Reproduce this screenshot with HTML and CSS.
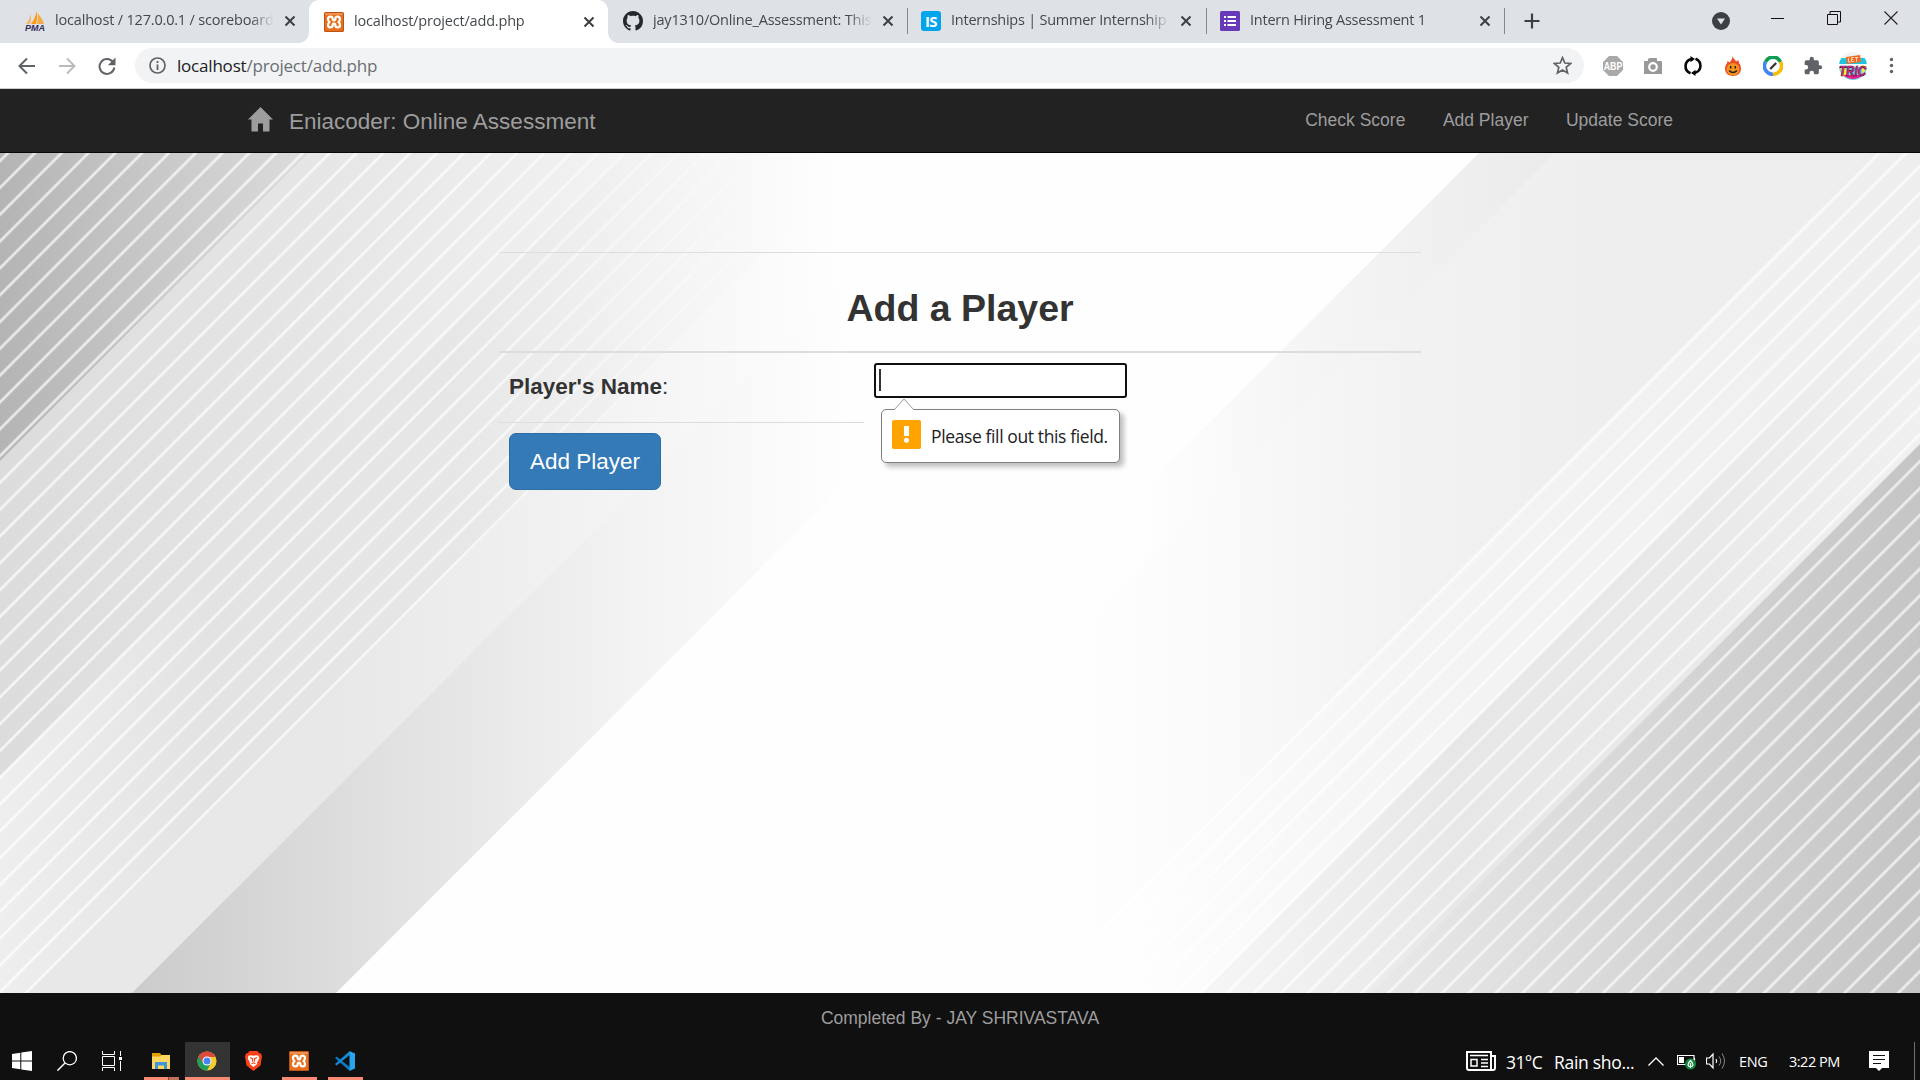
FILE: index.html
```html
<!DOCTYPE html>
<html lang="en">
<head>
<meta charset="utf-8">
<title>localhost/project/add.php</title>
<link rel="stylesheet" href="styles.css">
</head>
<body>
<svg class="defs" width="0" height="0">
  <symbol id="close" viewBox="0 0 12 12"><path d="M1.5 1.5l9 9M10.500 1.500l-9 9" stroke="#3c4043" stroke-width="2" fill="none"/></symbol>
  <symbol id="xampp" viewBox="0 0 20 20">
    <rect width="20" height="20" rx="1.500" fill="#e8701c"/><rect x=".5" y=".5" width="19" height="19" rx="1.500" fill="none" stroke="#b9551a"/><path d="M1 1h18v2H1z" fill="#f6a56c" opacity=".6"/>
    <path d="M10 8.300C9 8.300 8.600 7.600 8.600 6.500 8.600 5 7.600 4.600 6.400 4.600 4.800 4.600 4 5.600 4 7c0 1.500.8 2.200 1.400 3C4.800 10.800 4 11.500 4 13c0 1.400.8 2.400 2.400 2.400 1.200 0 2.200-.4 2.200-1.900 0-1.100.4-1.800 1.400-1.800s1.400.7 1.400 1.800c0 1.500 1 1.900 2.200 1.900 1.600 0 2.400-1 2.400-2.400 0-1.500-.8-2.200-1.400-3 .6-.8 1.400-1.500 1.400-3 0-1.400-.8-2.400-2.400-2.400-1.200 0-2.200.4-2.200 1.900 0 1.100-.4 1.800-1.400 1.800z" fill="none" stroke="#fff" stroke-width="2.200"/>
  </symbol>
</svg>

<header class="browser">
  <div class="tabstrip">
    <div class="tab">
      <svg class="fav" viewBox="0 0 20 20"><path d="M1 13C4 9 5 6 5.500 3c.8 3 .7 7-.3 10z" fill="#f8b76a"/><path d="M6 13C9 9 11 5 11.500 0c1 4 .6 9-.5 13z" fill="#f89c0e"/><path d="M12 13c.8-4 1-7 .6-11 2.500 3 5.500 7 6.400 11z" fill="#f7a94a"/><text x="0" y="19.500" class="pma" textLength="20" lengthAdjust="spacingAndGlyphs">PMA</text></svg>
      <span class="tab-title">localhost / 127.0.0.1 / scoreboard</span><svg class="x"><use href="#close"/></svg>
    </div>
    <div class="tab active">
      <svg class="fav"><use href="#xampp"/></svg>
      <span class="tab-title">localhost/project/add.php</span><svg class="x"><use href="#close"/></svg>
    </div>
    <div class="tab">
      <svg class="fav" viewBox="0 0 16 16"><path fill="#24292e" d="M8 0C3.580 0 0 3.580 0 8c0 3.540 2.290 6.530 5.470 7.590.4.070.55-.17.55-.38 0-.19-.01-.82-.01-1.490-2.010.37-2.530-.49-2.690-.94-.09-.23-.48-.94-.82-1.130-.28-.15-.68-.52-.01-.53.63-.01 1.080.58 1.230.82.72 1.210 1.870.87 2.330.66.070-.52.28-.87.51-1.070-1.780-.2-3.640-.89-3.640-3.950 0-.87.31-1.590.82-2.150-.08-.2-.36-1.020.08-2.120 0 0 .67-.21 2.200.82.64-.18 1.320-.27 2-.27s1.360.09 2 .27c1.530-1.040 2.200-.82 2.200-.82.44 1.100.16 1.920.08 2.120.51.56.82 1.270.82 2.150 0 3.070-1.870 3.750-3.650 3.950.29.25.54.73.54 1.480 0 1.070-.01 1.930-.01 2.200 0 .21.15.46.55.38A8.010 8.010 0 0016 8c0-4.420-3.580-8-8-8z"/></svg>
      <span class="tab-title">jay1310/Online_Assessment: This</span><svg class="x"><use href="#close"/></svg>
    </div>
    <div class="tab split">
      <span class="fav is-logo">IS</span>
      <span class="tab-title">Internships | Summer Internship 2</span><svg class="x"><use href="#close"/></svg>
    </div>
    <div class="tab split end">
      <svg class="fav" viewBox="0 0 20 20"><rect width="20" height="20" rx="1.500" fill="#673ab7"/><path d="M4 5h2v2H4zM7.500 5H16v2H7.500zM4 9h2v2H4zM7.500 9H16v2H7.500zM4 13h2v2H4zM7.500 13H16v2H7.500z" fill="#fff"/></svg>
      <span class="tab-title">Intern Hiring Assessment 1</span><svg class="x"><use href="#close"/></svg>
    </div>
    <svg class="plus" viewBox="0 0 16 16"><path d="M8 .5v15M.5 8h15" stroke="#3c4043" stroke-width="2.200"/></svg>
    <div class="window-controls">
      <svg width="18" height="18" viewBox="0 0 18 18"><circle cx="9" cy="9" r="9" fill="#3c4043"/><path d="M5 6.500h8L9 12.500z" fill="#dee1e6"/></svg>
      <svg width="14" height="14" viewBox="0 0 14 14"><path d="M0 7.500h13" stroke="#111"/></svg>
      <svg width="14" height="14" viewBox="0 0 14 14"><path d="M.5 3.500h10v10H.5zM3 3.500v-3h10.500V11h-3" stroke="#111" fill="none"/></svg>
      <svg width="14" height="14" viewBox="0 0 14 14"><path d="M.5.5l13 13M13.500.5l-13 13" stroke="#222" stroke-width="1.100"/></svg>
    </div>
  </div>
  <div class="toolbar">
    <svg width="18" height="18" viewBox="0 0 18 18" class="t-back"><path d="M17 9H2M9 1.500L1.500 9 9 16.500" stroke="#5f6368" stroke-width="2" fill="none"/></svg>
    <svg width="18" height="18" viewBox="0 0 18 18" class="t-fwd"><path d="M1 9h15M9 1.500L16.500 9 9 16.500" stroke="#babcbe" stroke-width="2" fill="none"/></svg>
    <svg width="18" height="18" viewBox="0 0 18 18" class="t-reload"><path d="M15 5.200A7.400 7.400 0 1 0 16.300 10.500" stroke="#5f6368" stroke-width="2" fill="none"/><path d="M17.500.5v7.700H9.800z" fill="#5f6368"/></svg>
    <div class="omnibox">
      <svg width="17" height="17" viewBox="0 0 17 17"><circle cx="8.500" cy="8.500" r="7.500" stroke="#5f6368" stroke-width="1.700" fill="none"/><path d="M8.500 7.500V13M8.500 4v2" stroke="#5f6368" stroke-width="1.800"/></svg>
      <span class="url">localhost<span>/project/add.php</span></span>
      <svg class="star" width="19" height="19" viewBox="0 0 18 18"><path d="M9 1.500l2.200 5.100 5.500.5-4.200 3.600 1.300 5.400L9 13.200l-4.800 2.900 1.300-5.400L1.300 7.100l5.500-.5z" fill="none" stroke="#5f6368" stroke-width="1.600"/></svg>
    </div>
    <div class="extensions">
      <svg viewBox="0 0 20 20"><path d="M6 0h8l6 6v8l-6 6H6l-6-6V6z" fill="#a9a9a9"/><text x=".8" y="14" class="abp" textLength="18.500" lengthAdjust="spacingAndGlyphs">ABP</text></svg>
      <svg viewBox="0 0 20 20"><path d="M1 5h4V2.500h9V5h4q1 0 1 1v12H1z" fill="#999"/><path d="M6.500 2h7v3h-7z" fill="#999"/><circle cx="10" cy="11" r="3.800" fill="#999" stroke="#fff" stroke-width="2.200"/></svg>
      <svg viewBox="0 0 20 20"><path d="M7.500 17.300C.5 14.500 1 4.800 8.500 3M12.500 2.700c7 2.800 6.500 12.500-1 14.300" fill="none" stroke="#050505" stroke-width="2.600"/><path d="M7.500 0l4.500 3-4.500 3.200zM12.500 20L8 17l4.500-3.200z" fill="#050505"/></svg>
      <svg viewBox="0 0 20 20"><path d="M9.500 0c.5 2.500 3 3.500 3.500 5.500L15.500 4c-.3 3 2.500 4.500 2.500 8.500C18 17 15 20 10 20s-8-3-8-7.500C2 9 4.500 8 4.500 5L6.500 6.500C8 5 9.500 3 9.500 0z" fill="#ef4a26"/><circle cx="10" cy="13.300" r="6.400" fill="#f7931e"/><path d="M7.700 10v2.500M12.300 10v2.500M6 14.500q4 4 8 0" stroke="#222" stroke-width="1.500" fill="none"/></svg>
      <svg viewBox="0 0 20 20"><g fill="none" stroke-width="3.600"><path d="M2.500 6A8.200 8.200 0 0 1 17.500 6" stroke="#0f9d58"/><path d="M17.500 6A8.200 8.200 0 0 1 10 18.200" stroke="#fbbc04"/><path d="M10 18.200A8.200 8.200 0 0 1 2.500 6" stroke="#4285f4"/></g><path d="M7.200 13l6-6" stroke="#333" stroke-width="2.300"/></svg>
      <svg viewBox="0 0 24 24"><path fill="#5f6368" d="M20.500 11H19V7a2 2 0 0 0-2-2h-4V3.500a2.500 2.500 0 0 0-5 0V5H4a2 2 0 0 0-2 2v3.800h1.500a2.700 2.700 0 0 1 0 5.400H2V20a2 2 0 0 0 2 2h3.800v-1.500a2.700 2.700 0 0 1 5.400 0V22H17a2 2 0 0 0 2-2v-4h1.500a2.500 2.500 0 0 0 0-5z"/></svg>
      <svg class="avatar" viewBox="0 0 28 28"><clipPath id="av"><circle cx="14" cy="14" r="14"/></clipPath><g clip-path="url(#av)"><path d="M0 0h28v6H0z" fill="#f1f4f5"/><path d="M0 6h28v6H0z" fill="#20c4df"/><path d="M0 12h28v3H0z" fill="#fff"/><path d="M0 15h28v13H0z" fill="#6fd3e6"/><path d="M1 14h5l3 9-5 2zM22 13l6 1-4 9z" fill="#ffe83a"/><path d="M7 5l14-2 1 7-14 2z" fill="#f36c21"/><path d="M4 23q10 8 20 0z" fill="#ec1c88"/></g><path d="M9.500 6v4h2M15 5.500h-2.500v4H15M14 7.500h-1.500M16 5.500h3M17.500 5.500v4" stroke="#f9d4b8" fill="none"/><text x="0" y="24" class="tric" textLength="27" lengthAdjust="spacingAndGlyphs">TRIC</text></svg>
      <svg viewBox="0 0 20 20" class="dots"><g fill="#5f6368"><circle cx="10" cy="3" r="2"/><circle cx="10" cy="10" r="2"/><circle cx="10" cy="17" r="2"/></g></svg>
    </div>
  </div>
</header>

<nav class="navbar">
  <a class="brand"><svg width="25" height="25" viewBox="0 0 25 25"><path d="M12.500 0L25 12.500h-3.500V24.500h-6.500v-8h-5v8H3.500v-12H0z" fill="#9d9d9d"/></svg><span>Eniacoder: Online Assessment</span></a>
  <div class="links"><a>Check Score</a><a>Add Player</a><a>Update Score</a></div>
</nav>

<main class="stage">
  <svg class="backdrop" viewBox="0 153 1920 840" preserveAspectRatio="none">
    <defs>
      <linearGradient id="gDark" gradientUnits="userSpaceOnUse" x1="0" y1="0" x2="310" y2="0"><stop offset="0" stop-color="#b4b4b4"/><stop offset="1" stop-color="#dcdcdc"/></linearGradient>
      <linearGradient id="gMid" gradientUnits="userSpaceOnUse" x1="0" y1="0" x2="840" y2="0"><stop offset="0" stop-color="#dcdcdc"/><stop offset=".45" stop-color="#e8e8e8"/><stop offset=".75" stop-color="#f3f3f3"/><stop offset="1" stop-color="#fefefe"/></linearGradient>
      <linearGradient id="gMidB" gradientUnits="userSpaceOnUse" x1="0" y1="0" x2="840" y2="0"><stop offset="0" stop-color="#eeeeee"/><stop offset=".25" stop-color="#e3e3e3"/><stop offset=".55" stop-color="#e7e7e7"/><stop offset=".8" stop-color="#f4f4f4"/><stop offset="1" stop-color="#fefefe"/></linearGradient>
      <linearGradient id="gBand" gradientUnits="userSpaceOnUse" x1="0" y1="0" x2="860" y2="0"><stop offset="0" stop-color="#e8e8e8"/><stop offset=".4" stop-color="#e8e8e8"/><stop offset=".7" stop-color="#f3f3f3"/><stop offset=".98" stop-color="#fefefe"/></linearGradient>
      <linearGradient id="gShade" gradientUnits="userSpaceOnUse" x1="130" y1="0" x2="850" y2="0"><stop offset="0" stop-color="#cbcbcb"/><stop offset=".36" stop-color="#e1e1e1"/><stop offset=".68" stop-color="#f2f2f2"/><stop offset="1" stop-color="#fefefe"/></linearGradient>
      <linearGradient id="gR1" gradientUnits="userSpaceOnUse" x1="1140" y1="0" x2="1560" y2="0"><stop offset="0" stop-color="#fefefe"/><stop offset=".4" stop-color="#f5f5f5"/><stop offset="1" stop-color="#ebebeb"/></linearGradient>
      <linearGradient id="gR2" gradientUnits="userSpaceOnUse" x1="1080" y1="0" x2="1620" y2="0"><stop offset="0" stop-color="#fefefe"/><stop offset=".3" stop-color="#f9f9f9"/><stop offset=".6" stop-color="#f2f2f2"/><stop offset="1" stop-color="#eeeeee"/></linearGradient>
      <linearGradient id="gR3" gradientUnits="userSpaceOnUse" x1="1130" y1="0" x2="1920" y2="0"><stop offset="0" stop-color="#fefefe"/><stop offset=".35" stop-color="#f4f4f4"/><stop offset="1" stop-color="#eeeeee"/></linearGradient>
      <linearGradient id="gR4" gradientUnits="userSpaceOnUse" x1="1200" y1="0" x2="1920" y2="0"><stop offset="0" stop-color="#f6f6f6"/><stop offset=".35" stop-color="#e7e7e7"/><stop offset=".7" stop-color="#e9e9e9"/><stop offset="1" stop-color="#f0f0f0"/></linearGradient>
      <linearGradient id="gR5" gradientUnits="userSpaceOnUse" x1="1370" y1="0" x2="1920" y2="0"><stop offset="0" stop-color="#e9e9e9"/><stop offset=".4" stop-color="#dadada"/><stop offset="1" stop-color="#c5c5c5"/></linearGradient>
      <linearGradient id="fadeL" gradientUnits="userSpaceOnUse" x1="450" y1="0" x2="860" y2="0"><stop offset="0" stop-color="#fff"/><stop offset="1" stop-color="#000"/></linearGradient>
      <mask id="mL" maskUnits="userSpaceOnUse" x="0" y="153" width="1920" height="840"><path d="M0 153h1920v840H0z" fill="url(#fadeL)"/></mask>
      <pattern id="sL" patternUnits="userSpaceOnUse" x="112.200" y="0" width="18.960" height="40" patternTransform="rotate(45)"><path d="M0 0h3.200v40H0z" fill="#fff" opacity=".4"/><path d="M.7 0h1.800v40H.7z" fill="#fff" opacity=".6"/></pattern>
      <pattern id="sR" patternUnits="userSpaceOnUse" x="1435.500" y="0" width="18.980" height="40" patternTransform="rotate(45)"><path d="M0 0h3.200v40H0z" fill="#fff" opacity=".4"/><path d="M.7 0h1.800v40H.7z" fill="#fff" opacity=".55"/></pattern>
    </defs>
    <path d="M0 153h1920v840H0z" fill="#fefefe"/>
    <path d="M0 153h1176L336 993H0z" fill="url(#gShade)"/>
    <path d="M0 153h972L132 993H0z" fill="url(#gBand)"/>
    <path d="M0 153h868L28 993H0z" fill="url(#gMidB)"/>
    <path d="M0 153h624L0 777z" fill="url(#gMid)"/>
    <path d="M0 153h308L0 461z" fill="url(#gDark)"/>
    <path d="M0 153h868L28 993H0z" fill="url(#sL)" mask="url(#mL)"/>
    <path d="M1479 153h441v840H639z" fill="url(#gR1)"/>
    <path d="M1555 153h365v840H715z" fill="url(#gR2)"/>
    <path d="M1876 153h44v840h-884z" fill="url(#gR3)"/>
    <path d="M1920 275v718h-718z" fill="url(#gR4)"/>
    <path d="M1920 444v549h-549z" fill="url(#gR5)"/>
    <path d="M1876 153h44v840h-884z" fill="url(#sR)"/>
  </svg>
  <section class="form">
    <h2>Add a Player</h2>
    <div class="row">
      <div class="name"><b>Player's Name</b>:</div>
      <div class="field">
        <div class="input"><i></i></div>
        <div class="bubble">
          <svg class="tip" width="22" height="12" viewBox="0 0 22 12"><path d="M1 12L11 1l10 11" fill="#fff" stroke="#999"/></svg>
          <svg width="29" height="29" viewBox="0 0 29 29"><rect width="29" height="29" rx="2" fill="#ffa300"/><path d="M12 6h5v10h-5z" fill="#fff"/><circle cx="14.500" cy="20.300" r="2.500" fill="#fff"/></svg>
          <span>Please fill out this field.</span>
        </div>
      </div>
    </div>
    <button class="btn">Add Player</button>
  </section>
</main>

<footer class="footer">Completed By - JAY SHRIVASTAVA</footer>

<div class="taskbar">
  <div class="app start"><svg width="20" height="20" viewBox="0 0 20 20"><path d="M0 3l8.300-1.200v7.700H0zM9.300 1.600L20 0v9.500H9.300zM0 10.500h8.300v7.700L0 17zM9.300 10.500H20V20L9.300 18.400z" fill="#fff"/></svg></div>
  <div class="app"><svg width="20" height="20" viewBox="0 0 20 20"><circle cx="12.800" cy="7.200" r="6.600" fill="none" stroke="#fff" stroke-width="1.300"/><path d="M8 12L.4 19.600" stroke="#fff" stroke-width="1.500"/></svg></div>
  <div class="app"><svg width="20" height="20" viewBox="0 0 20 20"><path d="M.5 0v3.500h12V0M.5 5.500h12v9H.5zM.5 20v-3.500h12V20M18.500 0v5M18.500 10v10" fill="none" stroke="#fff"/><path d="M17 6h3v3h-3z" fill="#fff"/></svg></div>
  <div class="gap"></div>
  <div class="app open multi"><svg width="18" height="17" viewBox="0 0 18 17"><path d="M0 0h8l1.500 2H18v4H0z" fill="#e2a100"/><path d="M0 3.500h8L10 2h8v14H0z" fill="#ffd75e"/><path d="M3 16v-7h12v7h-3v-3.500H6V16z" fill="#3f96d8"/></svg></div>
  <div class="app current"><svg width="20" height="20" viewBox="0 0 20 20"><circle cx="10" cy="10" r="9.600" fill="#f9cb2e"/><path d="M10 10L1.700 5.200A9.600 9.600 0 0 0 10 19.600L14 12z" fill="#1f9f5a"/><path d="M1.700 5.200A9.600 9.600 0 0 1 18.300 5.200V6H10L5.800 12z" fill="#dc4a3d"/><circle cx="10" cy="10" r="4.500" fill="#fff"/><circle cx="10" cy="10" r="3.500" fill="#4285f4"/></svg></div>
  <div class="app"><svg width="17" height="20" viewBox="0 0 17 20"><path d="M4.500 0h8l1.500 2 2 .5 1 3-1.500 9-7 5.500-7-5.500L0 5.500l1-3L3 2z" fill="#fb4118"/><path d="M3.500 4.700l2.500-.5 2.500.6 2.500-.6 2.500.5.800 2.800-2.300 4 .3 1.500-3.800 3-3.800-3 .3-1.500-2.300-4z" fill="#fff"/><path d="M5 6.500l2.500 1.200v3M12 6.500L9.500 7.700v3M6.500 12.800l2-1 2 1" stroke="#fb4118" stroke-width="1.200" fill="none"/></svg></div>
  <div class="app open"><svg width="20" height="20"><use href="#xampp"/></svg></div>
  <div class="app open"><svg width="20" height="20" viewBox="0 0 20 20"><path d="M1.500 5.500L14.800 16v4L0 7z" fill="#0b7bc5"/><path d="M1.500 14.500L14.800 4V0L0 13z" fill="#1489d8"/><path d="M14.500 0L20 2.500v15L14.500 20z" fill="#29a5ee"/></svg></div>
  <div class="tray">
    <svg width="30" height="20" viewBox="0 0 30 20" class="news"><path d="M1 1h24v18H3q-2 0-2-2zM25 5h4v12q0 2-2 2h-3" fill="none" stroke="#fff" stroke-width="2"/><path d="M4 4.500h18M15 8.500h7M15 12h7M15 15.500h7" stroke="#fff" stroke-width="1.500"/><path d="M5 8.500h6v6.500H5z" fill="none" stroke="#fff" stroke-width="1.500"/></svg>
    <span class="temp">31°C</span><span class="rain">Rain sho...</span>
    <svg width="16" height="9" viewBox="0 0 16 9" class="chev"><path d="M.5 8.500L8 1l7.500 7.500" fill="none" stroke="#fff" stroke-width="1.300"/></svg>
    <svg width="20" height="16" viewBox="0 0 20 16" class="batt"><path d="M.5 1.500H17v9H.5zM17.500 4v4" fill="none" stroke="#fff" stroke-width="1.200"/><path d="M2 3h5v6H2z" fill="#fff"/><circle cx="13.500" cy="10" r="5.500" fill="#10893e"/><path d="M13.500 6.500q5 5 0 6.500-5-1.500 0-6.500zM13.500 9v5" fill="none" stroke="#fff" stroke-width="1.200"/></svg>
    <svg width="20" height="18" viewBox="0 0 20 18" class="vol"><path d="M.5 6h3L7 2v14l-3.500-4h-3z" fill="none" stroke="#fff" stroke-width="1.200"/><path d="M10 7q1.500 2 0 4" stroke="#fff" fill="none" stroke-width="1.200"/><path d="M13 4.500q3.500 4.500 0 9M16 1.500q5 7.500 0 15" stroke="#888" fill="none"/></svg>
    <span class="lang">ENG</span><span class="clock">3:22 PM</span>
    <svg width="20" height="20" viewBox="0 0 20 20" class="note"><path d="M0 0h20v17h-7l-3 3-3-3H0z" fill="#fff"/><path d="M4 4.500h12M4 8.500h12M4 12.500h8" stroke="#111" stroke-width="1.200"/></svg>
    <div class="desktop"></div>
  </div>
</div>
</body>
</html>
```
FILE: styles.css
```css
* { box-sizing: border-box; }
body { margin: 0; width: 1920px; height: 1080px; overflow: hidden; display: flex; flex-direction: column; font-family: "Liberation Sans", Arial, sans-serif; color: #333; background: #101010; }
.defs { display: none; }
svg { flex: none; display: block; }

.browser { font-family: "Open Sans", "Noto Sans", sans-serif; background: #fff; border-bottom: 1px solid #cfcfcf; height: 89px; }
.tabstrip { height: 43px; background: #dee1e6; display: flex; align-items: center; padding: 0 22px 1px 10px; }
.tab { width: 299px; height: 43px; padding-left: 15px; display: flex; align-items: center; position: relative; }
.tab.active { background: #fff; border-radius: 10px 10px 0 0; height: 44px; align-self: flex-start; z-index: 1; padding-bottom: 1px; }
.tab.active::before, .tab.active::after { content: ""; position: absolute; bottom: 1px; width: 10px; height: 10px; }
.tab.active::before { left: -10px; background: radial-gradient(circle at 0 0, transparent 9.5px, #fff 10px); }
.tab.active::after { right: -10px; background: radial-gradient(circle at 100% 0, transparent 9.5px, #fff 10px); }
.tab.split { border-left: 1px solid #85888c; height: 26px; padding-left: 13px; }
.tab.end { border-right: 1px solid #85888c; }
.fav { width: 20px; height: 20px; }
.tab-title { width: 219px; margin-left: 10px; font-size: 14.500px; letter-spacing: -.18px; line-height: 20px; padding-bottom: 1px; margin-top: -1px; white-space: nowrap; color: #45494d; -webkit-mask-image: linear-gradient(90deg, #000 195px, transparent 219px); mask-image: linear-gradient(90deg, #000 195px, transparent 219px); }
.split .tab-title { letter-spacing: -.24px; }
.x { width: 12px; height: 12px; margin-left: 10px; }
.pma { font: italic 700 8.500px "Liberation Sans", sans-serif; fill: #34305c; }
.is-logo { background: #00a5ec; color: #fff; border-radius: 3px; font-weight: 700; font-size: 15px; line-height: 20px; text-align: center; letter-spacing: -.5px; }
.plus { width: 16px; height: 16px; margin-left: 19px; }
.window-controls { margin-left: auto; display: flex; align-items: center; }
.window-controls svg:nth-child(1) { margin-right: 1px; }
.window-controls svg:nth-child(2) { margin: -6px 0 0 40px; }
.window-controls svg:nth-child(3) { margin: -6px 0 0 42px; }
.window-controls svg:nth-child(4) { margin: -6px 0 0 43px; }

.toolbar { height: 45px; display: flex; align-items: center; padding-left: 18px; }
.t-fwd { margin-left: 22px; }
.t-reload { margin-left: 22px; }
.omnibox { margin-left: 19px; width: 1449px; height: 35px; border-radius: 18px; background: #f1f3f4; display: flex; align-items: center; padding: 0 12px 0 14px; }
.url { margin-left: 11px; font-size: 17px; letter-spacing: -.2px; color: #202124; }
.url span { color: #6a6e73; }
.star { margin-left: auto; }
.extensions { display: flex; align-items: center; gap: 20px; margin-left: 19px; }
.extensions svg { width: 20px; height: 20px; }
.extensions .avatar { width: 28px; height: 28px; margin-left: -4px; }
.extensions .dots { width: 17px; height: 17px; margin-left: -4px; }
.abp { font: 700 10.500px "Liberation Sans", sans-serif; fill: #fff; }
.tric { font: italic 700 14.500px "Liberation Sans", sans-serif; fill: #ff2c93; stroke: #3b1645; stroke-width: .7px; }

.navbar { height: 64px; background: #222; border-bottom: 1px solid #080808; display: flex; justify-content: space-between; padding: 0 247px 0 248px; color: #9d9d9d; }
.brand { display: flex; gap: 16px; font-size: 22.500px; line-height: 26px; padding-top: 18px; }
.brand span { padding-top: 2px; }
.links { display: flex; gap: 37.500px; font-size: 17.500px; line-height: 22px; padding-top: 20px; }

.stage { height: 840px; display: grid; }
.backdrop { grid-area: 1 / 1; width: 1920px; height: 840px; }
.form { grid-area: 1 / 1; position: relative; width: 922px; margin: 99px auto 0; height: 260px; border-top: 1px solid #ddd; }
h2 { margin: 0; height: 100px; padding-top: 34px; font-size: 37.500px; line-height: 42px; text-align: center; border-bottom: 2px solid #ddd; font-weight: 700; }
.row { display: flex; height: 70px; }
.name { width: 365px; height: 70px; padding: 21px 10px 0; border-bottom: 1px solid #ddd; font-size: 22.500px; line-height: 26px; }
.field { padding: 10px 0 0 10px; width: 263px; position: relative; }
.input { width: 253px; height: 35px; border: 2px solid #101010; border-radius: 3px; background: #fff; padding: 4px 3px; }
.input i { display: block; width: 2px; height: 22px; background: #333; }
.bubble { position: absolute; left: 17px; top: 56px; width: 239px; height: 54px; background: #fff; border: 1px solid #808080; border-radius: 5px; box-shadow: 4px 4px 5px rgba(0,0,0,.25); display: flex; padding: 10px 0 0 10px; font: 17.500px/33px "Open Sans", "Noto Sans", sans-serif; color: #222; }
.bubble span { margin-left: 10px; white-space: nowrap; letter-spacing: -.38px; }
.bubble .tip { position: absolute; left: 11px; top: -12px; }
.btn { display: block; margin: 10px 0 0 10px; width: 152px; height: 57px; border: 1px solid #2e6da4; border-radius: 7px; background: #337ab7; color: #fff; font: 22.500px "Liberation Sans", Arial, sans-serif; padding: 0; }

.footer { height: 49px; background: #101010; color: #9d9d9d; text-align: center; font-size: 17.500px; line-height: 50px; }
.taskbar { height: 38px; background: #101010; display: flex; font-family: "Open Sans", "Noto Sans", sans-serif; color: #fff; }
.app { width: 45px; height: 38px; display: grid; place-items: center; }
.app:nth-child(-n+3) { padding-right: 2px; }
.app.open, .app.current { background: linear-gradient(#f98b75, #f98b75) 50% 100% / 35px 3px no-repeat; }
.app.multi { background: linear-gradient(90deg, #f98b75 24px, #7c473e 24px 25px, #c2705f 25px) 5px 100% / 35px 3px no-repeat; width: 46px; padding-right: 2px; }
.app.current { background: linear-gradient(#f98b75, #f98b75) 0 100% / 45px 3px no-repeat #333; padding-right: 1px; }
.app:nth-child(n+7) { width: 46px; }
.gap { width: 4px; }
.tray { margin-left: auto; display: flex; align-items: center; white-space: nowrap; }
.temp { width: 36px; margin-left: 10px; font-size: 17.500px; letter-spacing: -.6px; line-height: 24px; padding-top: 1px; }
.rain { width: 81px; margin-left: 12px; font-size: 17.500px; letter-spacing: -.3px; line-height: 24px; padding-top: 1px; }
.chev { margin-left: 13px; }
.batt { margin-left: 13px; margin-top: 2px; }
.vol { margin-left: 9px; }
.lang { width: 30px; margin-left: 13px; font-size: 14.500px; letter-spacing: -.4px; }
.clock { width: 54px; margin-left: 20px; font-size: 14.500px; letter-spacing: -.5px; }
.note { margin-left: 26px; }
.desktop { width: 6px; height: 38px; margin-left: 25px; border-left: 1px solid #707070; }
```
